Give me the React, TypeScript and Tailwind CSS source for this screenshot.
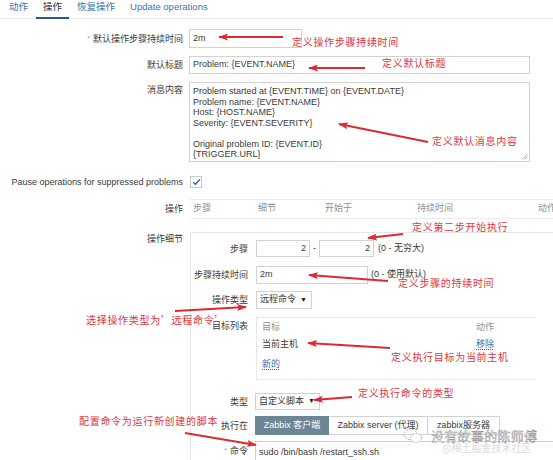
import React from 'react';

const RED = '#dc2a30';

// 红色标注箭头：从 tail 指向 tip
const arrows: [number, number, number, number][] = [
  [283, 37, 219, 37],
  [365, 68, 309, 68],
  [428, 142, 339, 124],
  [403, 234, 368, 238],
  [388, 281, 309, 275],
  [175, 311, 246, 307],
  [390, 348, 308, 343],
  [352, 397, 314, 400],
  [185, 433, 256, 445],
];

const notes: { text: string; x: number; y: number }[] = [
  { text: '定义操作步骤持续时间', x: 292, y: 42 },
  { text: '定义默认标题', x: 382, y: 63 },
  { text: '定义默认消息内容', x: 432, y: 141 },
  { text: '定义第二步开始执行', x: 412, y: 227 },
  { text: '定义步骤的持续时间', x: 398, y: 283 },
  { text: '选择操作类型为’远程命令’', x: 86, y: 320 },
  { text: '定义执行目标为当前主机', x: 391, y: 357 },
  { text: '定义执行命令的类型', x: 358, y: 393 },
  { text: '配置命令为运行新创建的脚本', x: 79, y: 421 },
];

function Box({ children, className = '' }: { children?: React.ReactNode; className?: string }) {
  return (
    <div className={`flex items-center border border-[#d2d2d2] bg-white px-[3px] ${className}`}>
      {children}
    </div>
  );
}

function Select({ value, className = '' }: { value: string; className?: string }) {
  return (
    <div className={`flex items-center justify-between border border-[#d2d2d2] bg-white pl-[3px] pr-[4px] ${className}`}>
      <span>{value}</span>
      <span className="text-[7px] text-[#222]">▼</span>
    </div>
  );
}

function Tabs() {
  const tabs = ['动作', '操作', '恢复操作', 'Update operations'];
  return (
    <div className="flex h-[19px] gap-[1px] border-b border-[#e8e8e8] pl-[2px]">
      {tabs.map((t, i) => (
        <div
          key={t}
          className={
            i === 1
              ? 'h-[19px] border-b-2 border-[#23598f] px-[7px] pt-[1px] text-[9.5px] leading-[12px] text-[#26323a]'
              : 'h-[19px] px-[7px] pt-[1px] text-[9.5px] leading-[12px] text-[#3a74b3]'
          }
        >
          {t}
        </div>
      ))}
    </div>
  );
}

function Label({ children, className = '' }: { children: React.ReactNode; className?: string }) {
  return <div className={`shrink-0 text-right leading-[12px] ${className}`}>{children}</div>;
}

function Req() {
  return <span className="mr-[3px] align-top text-[7px] text-[#9a9a9a]">*</span>;
}

export default function App() {
  return (
    <div className="relative h-[460px] w-[553px] overflow-hidden bg-white font-['Liberation_Sans','Noto_Sans_CJK_SC',sans-serif] text-[9px] text-[#3a3a3a]">
      <Tabs />

      <div className="flex flex-col">
        {/* 默认操作步骤持续时间 */}
        <div className="mt-[10px] flex h-[19px] items-center">
          <Label className="w-[183px]">
            <Req />
            默认操作步骤持续时间
          </Label>
          <Box className="ml-[6px] h-[19px] w-[113px]">2m</Box>
        </div>

        {/* 默认标题 */}
        <div className="mt-[8px] flex h-[18px] items-center">
          <Label className="w-[183px]">默认标题</Label>
          <Box className="ml-[6px] h-[18px] w-[341px]">Problem: {'{EVENT.NAME}'}</Box>
        </div>

        {/* 消息内容 */}
        <div className="mt-[8px] flex items-start">
          <Label className="w-[183px] pt-[2px]">消息内容</Label>
          <div className="relative ml-[6px] h-[80px] w-[341px] border border-[#d2d2d2] px-[3px] pt-[3px] leading-[10.5px] whitespace-pre">
            {'Problem started at {EVENT.TIME} on {EVENT.DATE}\nProblem name: {EVENT.NAME}\nHost: {HOST.NAME}\nSeverity: {EVENT.SEVERITY}\n\nOriginal problem ID: {EVENT.ID}\n{TRIGGER.URL}'}
            <svg className="absolute bottom-[1px] right-[1px]" width="7" height="7" viewBox="0 0 7 7">
              <line x1="1" y1="6.5" x2="6.5" y2="1" stroke="#9a9a9a" strokeWidth="0.8" />
              <line x1="3.5" y1="6.5" x2="6.5" y2="3.5" stroke="#9a9a9a" strokeWidth="0.8" />
            </svg>
          </div>
        </div>

        {/* 抑制问题时暂停操作 */}
        <div className="mt-[14px] flex h-[12px] items-center">
          <Label className="w-[183px]">Pause operations for suppressed problems</Label>
          <div className="ml-[7px] flex h-[12px] w-[12px] items-center justify-center border border-[#c8c8c8] bg-white">
            <svg width="9" height="8" viewBox="0 0 9 8">
              <path d="M1.2 4.2 L3.5 6.3 L7.8 1.5" fill="none" stroke="#2a69a8" strokeWidth="1.5" />
            </svg>
          </div>
        </div>

        {/* 操作列表表头 */}
        <div className="mt-[11px] flex h-[20px] items-center">
          <Label className="w-[183px]">操作</Label>
          <div className="ml-[7px] flex h-[20px] flex-1 items-center whitespace-nowrap border-y border-[#ececec] pl-[3px] text-[#8f8f8f]">
            <span className="w-[65px] shrink-0">步骤</span>
            <span className="w-[67px] shrink-0">细节</span>
            <span className="w-[92px] shrink-0">开始于</span>
            <span className="w-[121px] shrink-0">持续时间</span>
            <span className="shrink-0">动作</span>
          </div>
        </div>

        {/* 操作细节 */}
        <div className="mt-[13px] flex items-start">
          <Label className="w-[183px] pt-[1px]">操作细节</Label>
          <div className="ml-[7px] flex h-[240px] flex-1 flex-col border-l border-t border-[#e6e6e6] pt-[7px]">
            <div className="flex h-[17px] items-center">
              <Label className="w-[57px]">步骤</Label>
              <Box className="ml-[8px] h-[17px] w-[54px] justify-end">2</Box>
              <span className="w-[9px] text-center">-</span>
              <Box className="h-[17px] w-[55px] justify-end">2</Box>
              <span className="ml-[4px]">(0 - 无穷大)</span>
            </div>

            <div className="mt-[9px] flex h-[18px] items-center">
              <Label className="w-[57px]">步骤持续时间</Label>
              <Box className="ml-[8px] h-[18px] w-[112px]">2m</Box>
              <span className="ml-[3px]">(0 - 使用默认)</span>
            </div>

            <div className="mt-[7px] flex h-[18px] items-center">
              <Label className="w-[57px]">操作类型</Label>
              <Select value="远程命令" className="ml-[8px] h-[18px] w-[56px]" />
            </div>

            <div className="mt-[8px] flex items-start">
              <Label className="w-[57px] pt-[3px]">目标列表</Label>
              <div className="ml-[8px] flex w-[280px] flex-col border-y border-l border-[#e8e8e8] pb-[7px] pl-[5px]">
                <div className="grid h-[20px] grid-cols-[214px_1fr] items-center text-[#8f8f8f]">
                  <span>目标</span>
                  <span>动作</span>
                </div>
                <div className="grid h-[14px] grid-cols-[214px_1fr] items-center">
                  <span>当前主机</span>
                  <span className="text-[#2f6db0] underline decoration-dotted underline-offset-2">移除</span>
                </div>
                <div className="mt-[6px] flex h-[14px] items-center">
                  <span className="text-[#2f6db0] underline decoration-dotted underline-offset-2">新的</span>
                </div>
              </div>
            </div>

            <div className="mt-[13px] flex h-[17px] items-center">
              <Label className="w-[57px]">类型</Label>
              <Select value="自定义脚本" className="ml-[7px] h-[17px] w-[65px]" />
            </div>

            <div className="mt-[6px] flex h-[19px] items-center">
              <Label className="w-[57px]">执行在</Label>
              <div className="ml-[7px] flex h-[19px]">
                <div className="flex w-[74px] items-center justify-center border border-[#6d8696] bg-[#6d8696] text-white">
                  Zabbix 客户端
                </div>
                <div className="flex w-[99px] items-center justify-center border-y border-r border-[#d2d2d2]">
                  Zabbix server (代理)
                </div>
                <div className="flex w-[72px] items-center justify-center border-y border-r border-[#d2d2d2]">
                  zabbix服务器
                </div>
              </div>
            </div>

            <div className="mt-[6px] flex items-start">
              <Label className="w-[57px] pt-[4px]">
                <Req />
                命令
              </Label>
              <div className="ml-[7px] h-[40px] flex-1 border-l border-t border-[#d2d2d2] pl-[3px] pt-[4px] leading-[12px]">
                sudo /bin/bash /restart_ssh.sh
              </div>
            </div>
          </div>
        </div>
      </div>

      {/* 标注层 */}
      <div className="pointer-events-none absolute inset-0">
        <svg className="absolute inset-0" width="553" height="460">
          <defs>
            <marker id="head" markerWidth="10" markerHeight="7" refX="9" refY="3.5" orient="auto" markerUnits="userSpaceOnUse">
              <path d="M0,0 L10,3.5 L0,7 L2,3.5 z" fill={RED} />
            </marker>
          </defs>
          {arrows.map(([x1, y1, x2, y2], i) => (
            <line key={i} x1={x1} y1={y1} x2={x2} y2={y2} stroke={RED} strokeWidth="1.8" markerEnd="url(#head)" />
          ))}
        </svg>
        {notes.map((n) => (
          <span
            key={n.text}
            className="absolute whitespace-nowrap font-['Noto_Sans_CJK_SC',sans-serif] text-[10px] leading-[14px] tracking-[0.7px] text-[#e0353b]"
            style={{ left: n.x, top: n.y - 7 }}
          >
            {n.text}
          </span>
        ))}

        {/* 水印 */}
        <div className="absolute left-[403px] top-[428px] flex items-center gap-[8px]">
          <svg width="20" height="16" viewBox="0 0 20 16">
            <ellipse cx="7.5" cy="6.5" rx="6.5" ry="5.3" fill="none" stroke="#a8a8a8" strokeWidth="0.9" strokeDasharray="2 1.2" />
            <ellipse cx="13" cy="10" rx="5.5" ry="4.5" fill="white" stroke="#a8a8a8" strokeWidth="0.9" strokeDasharray="2 1.2" />
          </svg>
          <span className="font-['Noto_Sans_CJK_SC',sans-serif] text-[13px] leading-[16px] tracking-[0.3px] text-white [-webkit-text-stroke:0.45px_#8a8a8a]">
            没有故事的陈师傅
          </span>
        </div>
        <span className="absolute left-[442px] top-[442px] font-['Noto_Sans_CJK_SC',sans-serif] text-[10px] leading-[12px] text-[#dcdcdc]">
          @稀土掘金技术社区
        </span>
      </div>
    </div>
  );
}
